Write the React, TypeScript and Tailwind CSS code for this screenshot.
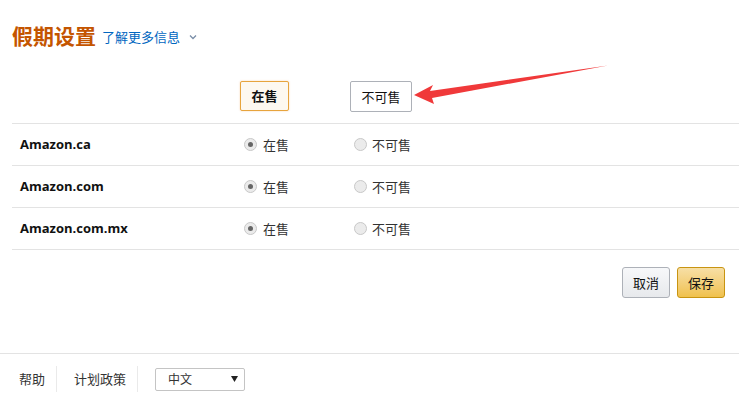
import React from 'react';

const rows = ['Amazon.ca', 'Amazon.com', 'Amazon.com.mx'];

const Radio = ({ checked }: { checked?: boolean }) => (
  <span className="w-[13px] h-[13px] rounded-full border border-[#c8c8c8] bg-[#ebebeb] flex items-center justify-center shrink-0">
    {checked && <span className="w-[5px] h-[5px] rounded-full bg-[#666]" />}
  </span>
);

export default function App() {
  return (
    <div
      className="relative w-[739px] h-[404px] bg-white text-[#111] overflow-hidden"
      style={{ fontFamily: '"Noto Sans CJK SC", "Liberation Sans", Arial, sans-serif' }}
    >
      {/* Title */}
      <div className="flex items-end pl-[12px] pt-[20px] h-[48px]">
        <h1 className="text-[21px] leading-[26px] font-bold text-[#c45500]">假期设置</h1>
        <a className="ml-[6px] text-[13px] leading-[22px] text-[#0066c0]">了解更多信息</a>
        <svg className="ml-[9px] mb-[8px]" width="8" height="6" viewBox="0 0 8 6">
          <path d="M1 1.5 L4 4.5 L7 1.5" fill="none" stroke="#7a8ea8" strokeWidth="1.3" />
        </svg>
      </div>

      {/* Header buttons */}
      <div className="flex pl-[240px] mt-[33px] h-[42px]">
        <button className="w-[49px] h-[30px] border border-[#e7a43d] bg-[#fdf8f0] rounded-[2px] text-[13px] font-bold shadow-[0_0_2px_rgba(228,121,17,0.35)]">
          在售
        </button>
        <button className="ml-[61px] w-[62px] h-[31px] border border-[#adb1b8] bg-white rounded-[2px] text-[13px]">
          不可售
        </button>
      </div>

      {/* Rows */}
      <div className="ml-[12px] border-t border-[#e3e3e3]">
        {rows.map((r) => (
          <div key={r} className="flex items-center h-[42px] border-b border-[#e3e3e3]">
            <div className="w-[228px] pl-[8px] text-[13px] font-bold" style={{ fontFamily: '"Open Sans", "Liberation Sans", sans-serif' }}>
              {r}
            </div>
            <div className="flex items-center gap-[6px] w-[114px] pl-[4px] text-[13px] text-[#333]">
              <Radio checked />
              <span>在售</span>
            </div>
            <div className="flex items-center gap-[5px] text-[13px] text-[#333]">
              <Radio />
              <span>不可售</span>
            </div>
          </div>
        ))}
      </div>

      {/* Actions */}
      <div className="flex justify-end gap-[7px] pr-[14px] mt-[17px]">
        <button className="w-[48px] h-[31px] border border-[#adb1b8] rounded-[3px] bg-gradient-to-b from-[#f7f8fa] to-[#e7e9ec] text-[13px]">
          取消
        </button>
        <button className="w-[48px] h-[31px] border border-[#c89411] rounded-[3px] bg-gradient-to-b from-[#f7dfa5] to-[#f0c14b] text-[13px]">
          保存
        </button>
      </div>

      {/* Footer */}
      <div className="absolute left-0 right-0 top-[353px] border-t border-[#e3e3e3] flex items-center h-[51px] text-[13px] text-[#333]">
        <span className="pl-[19px] pr-[11px]">帮助</span>
        <span className="w-px h-[26px] bg-[#eaeaea]" />
        <span className="pl-[17px] pr-[11px]">计划政策</span>
        <span className="w-px h-[26px] bg-[#eaeaea]" />
        <div className="ml-[17px] w-[90px] h-[23px] border border-[#c4c4c4] rounded-[2px] flex items-center justify-between pl-[12px] pr-[6px] text-[12px]">
          <span>中文</span>
          <svg width="7" height="6" viewBox="0 0 7 6">
            <path d="M0 0 H7 L3.5 6 Z" fill="#222" />
          </svg>
        </div>
      </div>

      {/* Annotation arrow */}
      <svg className="absolute left-0 top-0 pointer-events-none" width="739" height="404">
        <path d="M608 65.5 L430 91 L433 85 L414 95 L434 104 L432 98 Z" fill="#f0393a" />
      </svg>
    </div>
  );
}
